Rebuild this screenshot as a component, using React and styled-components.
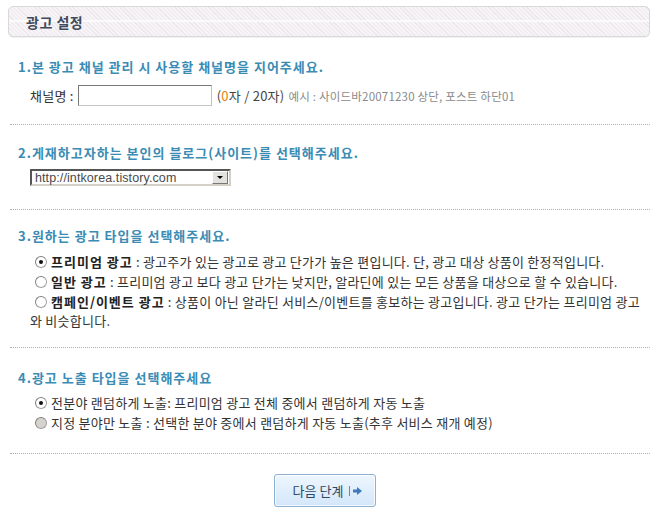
import React from "react";
import styled, { createGlobalStyle } from "styled-components";

const GlobalStyle = createGlobalStyle`
  body {
    margin: 0;
    background: #fff;
    font-family: "Noto Sans CJK KR", "Noto Sans", sans-serif;
    font-size: 13px;
    letter-spacing: 0.25px;
    color: #333;
  }
`;

const Page = styled.div`
  width: 662px;
  padding: 6px 0 0;
`;

const Header = styled.div`
  margin: 0 12px 0 8px;
  height: 29px;
  border: 1px solid #d9d9d9;
  border-radius: 5px;
  box-shadow: 0 1px 1px rgba(0, 0, 0, 0.06);
  background:
    linear-gradient(to bottom, transparent 13px, rgba(255, 255, 255, 0.7) 13px, rgba(255, 255, 255, 0.7) 15px, transparent 15px),
    repeating-linear-gradient(45deg, #f6f4f6 0 2px, #ece8ec 2px 3px);
  display: flex;
  align-items: center;
  padding-left: 17px;
`;

const HeaderTitle = styled.h1`
  margin: 0;
  font-size: 14px;
  font-weight: bold;
  letter-spacing: 0.5px;
  color: #3f4a5c;
`;

const Section = styled.section`
  padding: ${(p) => p.$pad};
  margin: 0 12px 0 10px;
  border-bottom: 1px dotted #b0b0b0;
`;

const SectionTitle = styled.h2`
  margin: 0 0 0 8px;
  font-size: 13px;
  line-height: 16px;
  font-weight: bold;
  letter-spacing: 1px;
  color: #3a8cb4;
`;

const Row = styled.div`
  display: flex;
  align-items: center;
  padding-left: 20px;
  margin-top: ${(p) => p.$top || 0}px;
  line-height: 20px;
`;

const Label = styled.span`
  color: #333;
  margin-right: 4px;
`;

const TextInput = styled.div`
  width: 132px;
  height: 19px;
  border: 1px solid #c4c4c4;
  border-top-color: #777;
  border-left-color: #777;
  background: #fff;
`;

const Count = styled.span`
  margin-left: 5px;
  color: #444;
`;

const Zero = styled.span`
  color: #e6800f;
`;

const Example = styled.span`
  margin-left: 4px;
  font-size: 11.5px;
  letter-spacing: 0.2px;
  color: #8a8a8a;
`;

const FakeSelect = styled.div`
  width: 194px;
  height: 13px;
  margin: 8px 0 0 20px;
  border: 2px solid #555;
  border-right-color: #d4d0c8;
  border-bottom-color: #d4d0c8;
  display: flex;
  align-items: center;
  justify-content: space-between;
  background: #fff;
  font-family: "Liberation Sans", Arial, sans-serif;
  font-size: 12.5px;
  letter-spacing: 0.1px;
  color: #4a4a4a;
  padding-left: 3px;
`;

const SelectArrow = styled.span`
  width: 14px;
  height: 11px;
  margin-right: 1px;
  background: #e4e2de;
  border: 1px solid #fff;
  border-right-color: #777;
  border-bottom-color: #777;
  display: flex;
  align-items: center;
  justify-content: center;
  &::after {
    content: "";
    border-left: 3px solid transparent;
    border-right: 3px solid transparent;
    border-top: 3px solid #000;
  }
`;

const OptionList = styled.div`
  padding-left: 20px;
  margin-top: ${(p) => p.$top || 0}px;
`;

const Option = styled.p`
  margin: 0;
  padding-top: 1px;
  line-height: 19px;
  color: #333;
`;

const Radio = styled.span`
  display: inline-block;
  vertical-align: -1px;
  width: 10px;
  height: 10px;
  margin: 0 4px 0 5px;
  border-radius: 50%;
  border: 1px solid #a0a0a0;
  border-top-color: #808080;
  border-left-color: #808080;
  background: ${(p) => (p.$disabled ? "#d6d3ce" : "#fff")};
  position: relative;
  &::after {
    content: "";
    display: ${(p) => (p.$checked ? "block" : "none")};
    position: absolute;
    left: 3px;
    top: 3px;
    width: 4px;
    height: 4px;
    border-radius: 50%;
    background: #111;
  }
`;

const Strong = styled.b`
  color: #222;
  font-weight: bold;
  letter-spacing: 1px;
`;

const ButtonBar = styled.div`
  display: flex;
  justify-content: center;
  padding: 20px 0 0;
  margin-right: 12px;
`;

const NextButton = styled.button`
  width: 102px;
  height: 33px;
  border: 1px solid #8fb2d2;
  border-radius: 3px;
  background: linear-gradient(to bottom, #eef6fe, #d3e7f9);
  box-shadow: inset 0 0 0 1px rgba(255, 255, 255, 0.7);
  display: flex;
  align-items: center;
  justify-content: center;
  gap: 6px;
  font-family: inherit;
  font-size: 13px;
  color: #2f4864;
  cursor: pointer;
  padding: 0 0 0 6px;
`;

const ArrowIcon = () => (
  <svg width="14" height="12" viewBox="0 0 14 12">
    <rect x="0" y="1" width="1" height="10" fill="#5b8fc4" />
    <path d="M4 4.5h4V2l5 4-5 4V7.5H4z" fill="#3d7bbd" />
  </svg>
);

const options = [
  {
    name: "프리미엄 광고",
    desc: " : 광고주가 있는 광고로 광고 단가가 높은 편입니다. 단, 광고 대상 상품이 한정적입니다.",
    checked: true,
  },
  {
    name: "일반 광고",
    desc: " : 프리미엄 광고 보다 광고 단가는 낮지만, 알라딘에 있는 모든 상품을 대상으로 할 수 있습니다.",
  },
  {
    name: "캠페인/이벤트 광고",
    desc: " : 상품이 아닌 알라딘 서비스/이벤트를 홍보하는 광고입니다. 광고 단가는 프리미엄 광고",
    tail: "와 비슷합니다.",
  },
];

const App = () => (
  <Page>
    <GlobalStyle />
    <Header>
      <HeaderTitle>광고 설정</HeaderTitle>
    </Header>

    <Section $pad="22px 0 18px">
      <SectionTitle>1.본 광고 채널 관리 시 사용할 채널명을 지어주세요.</SectionTitle>
      <Row $top={10}>
        <Label>채널명 :</Label>
        <TextInput />
        <Count>
          (<Zero>0</Zero>자 / 20자)
        </Count>
        <Example>예시 : 사이드바20071230 상단, 포스트 하단01</Example>
      </Row>
    </Section>

    <Section $pad="20px 0 23px">
      <SectionTitle>2.게재하고자하는 본인의 블로그(사이트)를 선택해주세요.</SectionTitle>
      <FakeSelect>
        http://intkorea.tistory.com
        <SelectArrow />
      </FakeSelect>
    </Section>

    <Section $pad="18px 0 17px">
      <SectionTitle>3.원하는 광고 타입을 선택해주세요.</SectionTitle>
      <OptionList $top={7}>
        {options.map((o) => (
          <Option key={o.name}>
            <Radio $checked={o.checked} />
            <Strong>{o.name}</Strong>
            {o.desc}
            {o.tail && (
              <>
                <br />
                <span>{o.tail}</span>
              </>
            )}
          </Option>
        ))}
      </OptionList>
    </Section>

    <Section $pad="22px 0 21px">
      <SectionTitle>4.광고 노출 타입을 선택해주세요</SectionTitle>
      <OptionList $top={6}>
        <Option>
          <Radio $checked />
          전분야 랜덤하게 노출: 프리미엄 광고 전체 중에서 랜덤하게 자동 노출
        </Option>
        <Option>
          <Radio $disabled />
          지정 분야만 노출 : 선택한 분야 중에서 랜덤하게 자동 노출(추후 서비스 재개 예정)
        </Option>
      </OptionList>
    </Section>

    <ButtonBar>
      <NextButton>
        다음 단계 <ArrowIcon />
      </NextButton>
    </ButtonBar>
  </Page>
);

export default App;
